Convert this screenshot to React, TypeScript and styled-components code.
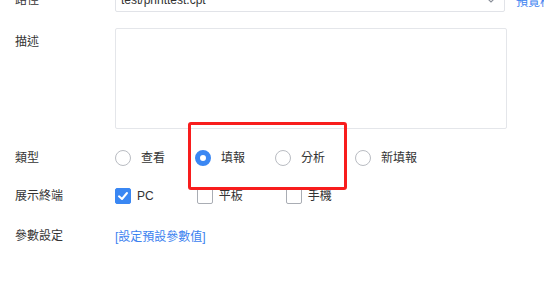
import React from "react";
import styled, { createGlobalStyle } from "styled-components";

const Global = createGlobalStyle`
  html, body { margin: 0; padding: 0; background: #fff; overflow: hidden; }
  body { font-family: "Liberation Sans", "Noto Sans CJK TC", sans-serif; font-size: 12px; color: #333; }
  * { box-sizing: border-box; }
`;

const Page = styled.div`
  position: relative;
  width: 544px;
  height: 285px;
  overflow: hidden;
`;

const Form = styled.div`
  display: flex;
  flex-direction: column;
  margin-top: -12px;
  padding-left: 15px;
`;

const Row = styled.div<{ $h: number; $mb: number; $top?: boolean }>`
  display: flex;
  align-items: ${(p) => (p.$top ? "flex-start" : "center")};
  height: ${(p) => p.$h}px;
  margin-bottom: ${(p) => p.$mb}px;
  flex-wrap: nowrap;
`;

const Label = styled.div<{ $pt?: number }>`
  width: 100px;
  flex: none;
  color: #333;
  font-size: 12px;
  line-height: 16px;
  padding-top: ${(p) => p.$pt ?? 0}px;
`;

const Select = styled.div`
  flex: none;
  width: 390px;
  height: 24px;
  border: 1px solid #e1e3e8;
  border-radius: 2px;
  display: flex;
  align-items: center;
  justify-content: space-between;
  padding: 0 7px 0 5px;
  color: #333;
`;

const SideLink = styled.a`
  flex: none;
  margin-left: 11px;
  color: #3c82f0;
  white-space: nowrap;
  text-decoration: none;
`;

const TextArea = styled.div`
  flex: none;
  width: 392px;
  height: 101px;
  border: 1px solid #e4e6ea;
  border-radius: 2px;
`;

const Group = styled.div<{ $gap: number }>`
  display: flex;
  align-items: center;
  gap: ${(p) => p.$gap}px;
`;

const Option = styled.label<{ $gap: number }>`
  display: flex;
  align-items: center;
  gap: ${(p) => p.$gap}px;
  color: #333;
  line-height: 16px;
`;

const Radio = styled.span<{ $on?: boolean }>`
  width: 16px;
  height: 16px;
  border-radius: 50%;
  flex: none;
  border: ${(p) => (p.$on ? "5px solid #3a87f3" : "1px solid #b9bcc2")};
  background: #fff;
`;

const Check = styled.span<{ $on?: boolean }>`
  width: 16px;
  height: 16px;
  border-radius: 2px;
  flex: none;
  display: flex;
  align-items: center;
  justify-content: center;
  background: ${(p) => (p.$on ? "#3a87f3" : "#fff")};
  border: 1px solid ${(p) => (p.$on ? "#3a87f3" : "#a9adb4")};
`;

const ParamLink = styled.a`
  color: #3c82f0;
  text-decoration: none;
`;

const Highlight = styled.div`
  position: absolute;
  left: 188px;
  top: 122px;
  width: 159px;
  height: 68px;
  border: 3px solid #f81d1d;
  border-radius: 3px;
  pointer-events: none;
`;

const Chevron = () => (
  <svg width="12" height="8" viewBox="0 0 12 8">
    <polyline points="1.5,1.5 6,6 10.5,1.5" fill="none" stroke="#8a8f99" strokeWidth="1.2" />
  </svg>
);

const Tick = () => (
  <svg width="12" height="12" viewBox="0 0 12 12">
    <polyline points="2,6.3 5,9 10,3" fill="none" stroke="#fff" strokeWidth="2" strokeLinecap="round" strokeLinejoin="round" />
  </svg>
);

const types = ["查看", "填報", "分析", "新填報"];
const terminals = [
  { name: "PC", on: true },
  { name: "平板", on: false },
  { name: "手機", on: false },
];

export default function App() {
  return (
    <Page>
      <Global />
      <Form>
        <Row $h={24} $mb={16}>
          <Label>路徑</Label>
          <Select>
            <span>test/printtest.cpt</span>
            <Chevron />
          </Select>
          <SideLink>預覽模板</SideLink>
        </Row>
        <Row $h={101} $mb={14} $top>
          <Label $pt={6}>描述</Label>
          <TextArea />
        </Row>
        <Row $h={29} $mb={9}>
          <Label>類型</Label>
          <Group $gap={30}>
            {types.map((t, i) => (
              <Option key={t} $gap={10}>
                <Radio $on={i === 1} />
                <span>{t}</span>
              </Option>
            ))}
          </Group>
        </Row>
        <Row $h={29} $mb={11}>
          <Label>展示終端</Label>
          <Group $gap={43}>
            {terminals.map((t) => (
              <Option key={t.name} $gap={6}>
                <Check $on={t.on}>{t.on && <Tick />}</Check>
                <span>{t.name}</span>
              </Option>
            ))}
          </Group>
        </Row>
        <Row $h={29} $mb={0}>
          <Label>參數設定</Label>
          <ParamLink>[設定預設參數值]</ParamLink>
        </Row>
      </Form>
      <Highlight />
    </Page>
  );
}
